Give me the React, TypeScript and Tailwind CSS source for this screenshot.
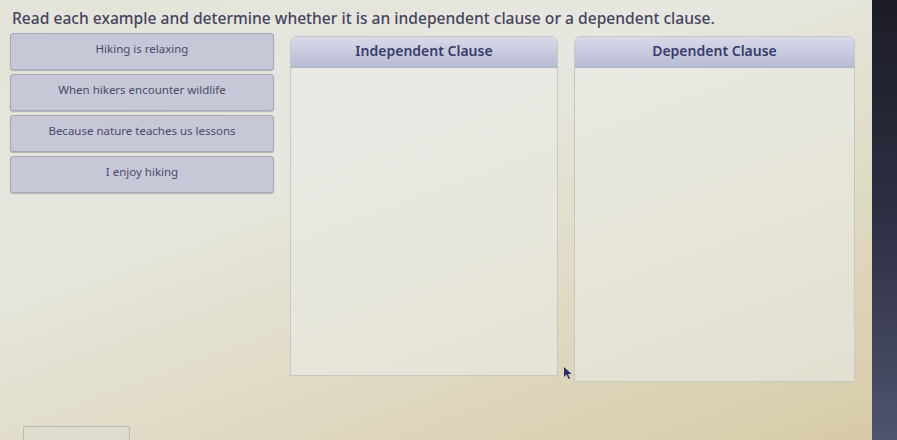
const examples = [
  "Hiking is relaxing",
  "When hikers encounter wildlife",
  "Because nature teaches us lessons",
  "I enjoy hiking",
];

function DropZone({ title, width, height }: { title: string; width: string; height: string }) {
  return (
    <div className={`${width} ${height} flex flex-col rounded-t-[7px] border border-[#c6c6c2] bg-[#ebebe6]/60`}>
      <div className="h-[31px] shrink-0 rounded-t-[6px] border-b border-[#b0b3c6] bg-gradient-to-b from-[#d8dae9] to-[#b8bcd3] pt-[3px] text-center text-[14px] font-semibold text-[#393c6a]">
        {title}
      </div>
      <div className="flex-1" />
    </div>
  );
}

export default function App() {
  return (
    <div
      className="flex h-[440px] w-[897px] overflow-hidden"
      style={{ fontFamily: '"Noto Sans", "Open Sans", sans-serif' }}
    >
      {/* Screen area */}
      <div className="relative flex-1 bg-[linear-gradient(160deg,#e4e3d9_0%,#e7e7e0_35%,#e1ddc9_60%,#d7cba8_100%)]">
        <div className="px-[12px] pt-[9px] text-[15.6px] font-medium leading-[18px] text-[#45445e]">
          Read each example and determine whether it is an independent clause or a dependent clause.
        </div>

        <div className="mt-[6px] flex items-start pl-[10px]">
          {/* Example cards */}
          <div className="flex w-[264px] flex-col gap-[4px]">
            {examples.map((text) => (
              <div
                key={text}
                className="h-[37px] rounded-[3px] border border-[#a6a7bb] bg-[#c7c8d7] pt-[6px] text-center text-[11.5px] text-[#4a4a68] shadow-[0_1px_1px_rgba(90,90,110,0.35)]"
              >
                {text}
              </div>
            ))}
          </div>

          <div className="ml-[16px] mt-[3px] flex items-start gap-[16px]">
            <DropZone title="Independent Clause" width="w-[268px]" height="h-[340px]" />
            <DropZone title="Dependent Clause" width="w-[281px]" height="h-[346px]" />
          </div>
        </div>

        {/* partial box at the bottom */}
        <div className="ml-[23px] mt-[44px] h-[20px] w-[107px] rounded-t-[2px] border border-[#b8b8b4] bg-[#dcdcd2]/50" />

        {/* mouse pointer */}
        <svg className="absolute left-[563px] top-[366px]" width="10" height="14" viewBox="0 0 10 14">
          <path d="M1 1 L1 11 L3.5 8.5 L5.5 13 L7 12.3 L5 8 L8.5 8 Z" fill="#2d2f6a" />
        </svg>
      </div>

      {/* dark bezel */}
      <div className="w-[25px] bg-gradient-to-b from-[#1c1c26] via-[#2e3044] to-[#4e5470]" />
    </div>
  );
}
